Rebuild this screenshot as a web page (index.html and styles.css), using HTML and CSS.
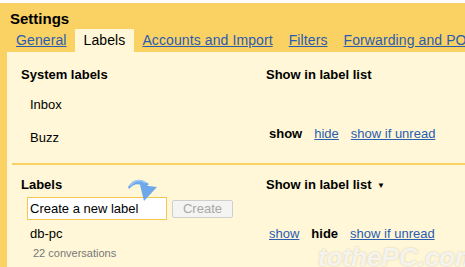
FILE: index.html
```html
<!DOCTYPE html>
<html lang="en-US">
<head>
  <meta charset="utf-8">
  <title>Settings - Labels</title>
  <link rel="stylesheet" href="styles.css">
</head>

<body>
  <div class="settings">
    <h1 class="title">Settings</h1>

    <div class="tabs">
      <a class="tab" href="#">General</a>
      <span class="tab tab-active">Labels</span>
      <a class="tab" href="#">Accounts and Import</a>
      <a class="tab" href="#">Filters</a>
      <a class="tab" href="#">Forwarding and POP/IMAP</a>
    </div>

    <div class="panel">
      <div class="section">
        <div class="row">
          <div class="col-name head">System labels</div>
          <div class="col-show head">Show in label list</div>
        </div>

        <div class="row row-inbox">
          <div class="col-name label">Inbox</div>
          <div class="col-show"></div>
        </div>

        <div class="row row-buzz">
          <div class="col-name label">Buzz</div>
          <div class="col-show links links-up">
            <b>show</b>
            <a href="#">hide</a>
            <a href="#">show if unread</a>
          </div>
        </div>
      </div>

      <div class="section section-user">
        <div class="row">
          <div class="col-name head">Labels</div>
          <div class="col-show head">Show in label list <span class="caret">&#9660;</span></div>
        </div>

        <div class="row row-new">
          <div class="new-label">
            <input class="new-input" type="text" value="Create a new label">
            <button class="new-button" disabled>Create</button>
            <svg class="hint-arrow" width="32" height="26" viewBox="0 0 32 26">
              <path d="M1,11 Q9,-2 22,8 L18,12 Q10,4 2,13 Z" fill="#6ea8ea"/>
              <path d="M13,9 L30,11 L17,25 Z" fill="#6ea8ea"/>
              <path d="M3,10 Q10,1 19,7" stroke="#a9cdf5" stroke-width="1.2" fill="none"/>
            </svg>
          </div>
        </div>

        <div class="row row-user">
          <div class="col-name">
            <div class="label">db-pc</div>
            <div class="count">22 conversations</div>
          </div>
          <div class="col-show links">
            <a href="#">show</a>
            <b>hide</b>
            <a href="#">show if unread</a>
          </div>
        </div>
      </div>
    </div>

    <div class="watermark">tothePC.com</div>
  </div>
</body>
</html>
```

FILE: styles.css
```css
body {margin:0; background:#ffffff; font-family:"Liberation Sans",Arial,Helvetica,sans-serif; color:#000000; font-size:13px; overflow:hidden;}
a {color:#2a5db0;}

.settings {position:relative; margin-top:3px; height:264px; background:#fad163; padding-left:7px; overflow:hidden;}
.title {margin:0; padding:7px 0 0 3px; font-size:15px; line-height:17px; font-weight:bold;}

.tabs {display:flex; margin:2px 0 0 1px; white-space:nowrap; font-size:14px; line-height:23px; letter-spacing:0.1px;}
.tab {padding:0 8px;}
.tab-active {padding:0 9px; background:#fff7d7; color:#000000;}

.panel {background:#fff7d7; height:215px;}

.section {margin-left:5px; padding:15px 0 17px 9px;}
.section-user {border-top:2px solid #fad163; padding-top:12px;}

.row {display:flex; line-height:16px;}
.col-name {box-sizing:border-box; width:245px; flex:none;}
.col-show {flex:1;}
.head {font-weight:bold;}
.caret {font-size:8px; vertical-align:1px; margin-left:2px;}

.row-inbox {margin-top:14px;}
.row-buzz {margin-top:17px;}
.row-new {margin-top:3px;}
.row-user {margin-top:6px;}

.label {padding-left:9px;}
.count {padding-left:12px; margin-top:4px; font-size:11px; line-height:14px; color:#777777;}

.links {display:flex; gap:12px; padding-left:3px;}
.links-up {margin-top:-4px;}

.new-label {position:relative; display:flex; align-items:center; margin-left:6px;}
.new-input {box-sizing:border-box; width:140px; height:23px; margin:0; padding:0 2px; border:1px solid #f3c650; background:#ffffff; font-family:"Liberation Sans",Arial,sans-serif; font-size:13px; color:#000000; outline:none;}
.new-button {box-sizing:border-box; width:61px; height:18px; margin:0 0 0 5px; padding:0; border:1px solid #cfcfcf; border-radius:2px; background:#f4f4f2; font-family:"Liberation Sans",Arial,sans-serif; font-size:13px; color:#a8a8a8;}
.hint-arrow {position:absolute; left:100px; top:-21px;}

.watermark {position:absolute; left:318px; top:241px; font-size:26px; line-height:26px; font-weight:bold; font-style:italic; color:rgba(255,255,255,0.8); text-shadow:0 0 2px rgba(170,160,140,0.6);}
```
